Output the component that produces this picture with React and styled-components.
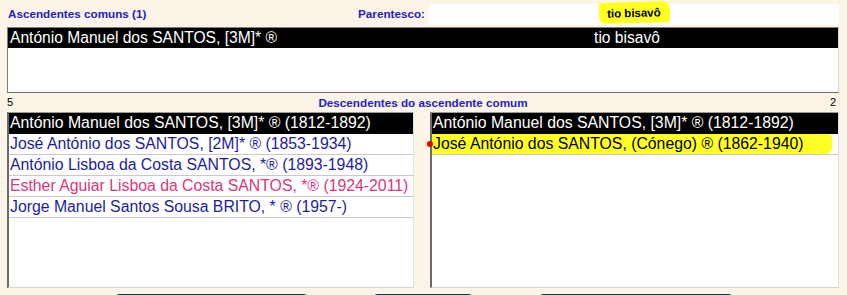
import React from "react";
import styled, { createGlobalStyle } from "styled-components";

const GlobalStyle = createGlobalStyle`
  html, body {
    margin: 0;
    padding: 0;
    background: #fcf4e7;
    overflow: hidden;
  }
`;

const Page = styled.div`
  width: 847px;
  height: 295px;
  overflow: hidden;
  background: #fcf4e7;
  font-family: "Liberation Sans", Arial, sans-serif;
  padding: 0 8px 0 7px;
  box-sizing: border-box;
`;

const HeaderRow = styled.div`
  height: 27px;
  display: flex;
  align-items: center;
`;

const Label = styled.div`
  font-size: 11.7px;
  font-weight: bold;
  color: #2222c4;
  padding-left: ${(p) => p.$pl || 0}px;
  margin-right: ${(p) => p.$mr || 0}px;
  flex: ${(p) => (p.$grow ? 1 : "none")};
`;

const RelationField = styled.div`
  width: 410px;
  height: 21px;
  margin-top: 2px;
  background: #ffffff;
  display: flex;
  align-items: center;
  justify-content: center;
  box-sizing: border-box;
`;

const Marker = styled.span`
  font-size: 11.5px;
  font-weight: bold;
  color: #000;
  background: #ffff20;
  padding: 5px 9px 4px 8px;
  margin-top: -4px;
  border-radius: 2px 7px 3px 6px;
  transform: rotate(-1.5deg);
`;

const TopList = styled.div`
  height: 66px;
  border: 1px solid #7f7f7f;
  border-right-color: #d8d8d8;
  border-bottom-color: #6f6f6f;
  background: #fff;
  box-sizing: border-box;
`;

const TopRow = styled.div`
  height: 20px;
  background: #000;
  color: #fff;
  font-size: 15.6px;
  display: grid;
  grid-template-columns: 421px 1fr;
  align-items: center;
  line-height: 20px;
`;

const Cell = styled.div`
  padding-left: ${(p) => p.$pl || 0}px;
  padding-right: ${(p) => p.$pr || 0}px;
  text-align: ${(p) => p.$align || "left"};
  white-space: nowrap;
`;

const SubHeader = styled.div`
  height: 19px;
  display: grid;
  grid-template-columns: 1fr auto 1fr;
  align-items: center;
`;

const Count = styled.div`
  font-size: 11px;
  color: #000;
  text-align: ${(p) => p.$align};
  padding: 0 ${(p) => p.$pr || 0}px 0 ${(p) => p.$pl || 0}px;
  margin-top: -1px;
`;

const Lists = styled.div`
  display: flex;
  gap: 16px;
`;

const ListBox = styled.div`
  width: ${(p) => p.$w}px;
  height: 176px;
  border: 1px solid #9a9a9a;
  border-left: 2px solid #6a6a6a;
  border-right-color: #e2e2e2;
  border-bottom-color: #d4d4d4;
  background: #fff;
  box-sizing: border-box;
`;

const Row = styled.div`
  position: relative;
  height: 21px;
  line-height: 20px;
  font-size: 15.8px;
  white-space: nowrap;
  padding-left: 1px;
  box-sizing: border-box;
  border-bottom: 1px solid ${(p) => (p.$selected ? "#000" : "#c9c9c9")};
  background: ${(p) => (p.$selected ? "#000" : "#fff")};
  color: ${(p) => (p.$selected ? "#fff" : p.$color || "#1c1ca0")};
`;

const Highlight = styled.div`
  background: #ffff26;
  color: #000;
  margin: 0 6px 0 -1px;
  padding-left: 1px;
  border-radius: 1px 4px 6px 2px;
  line-height: 20px;
`;

const Dot = styled.span`
  position: absolute;
  left: -5px;
  top: 7px;
  width: 6px;
  height: 6px;
  border-radius: 50%;
  background: #e80000;
`;

const Buttons = styled.div`
  display: flex;
  margin-top: 6px;
`;

const Button = styled.div`
  width: ${(p) => p.$w}px;
  margin-left: ${(p) => p.$ml}px;
  height: 24px;
  border: 1px solid #1d3446;
  border-radius: 4px;
  background: #f2f2ee;
  box-sizing: border-box;
`;

const leftRows = [
  { text: "António Manuel dos SANTOS, [3M]* ® (1812-1892)", selected: true },
  { text: "José António dos SANTOS, [2M]* ® (1853-1934)" },
  { text: "António Lisboa da Costa SANTOS, *® (1893-1948)" },
  { text: "Esther Aguiar Lisboa da Costa SANTOS, *® (1924-2011)", color: "#e0357d" },
  { text: "Jorge Manuel Santos Sousa BRITO, * ® (1957-)" },
];

export default function App() {
  return (
    <Page>
      <GlobalStyle />
      <HeaderRow>
        <Label $pl={1} $grow>
          Ascendentes comuns (1)
        </Label>
        <Label $mr={4}>Parentesco:</Label>
        <RelationField>
          <Marker>tio bisavô</Marker>
        </RelationField>
      </HeaderRow>
      <TopList>
        <TopRow>
          <Cell $pl={2}>António Manuel dos SANTOS, [3M]* ®</Cell>
          <Cell $align="center" $pr={13}>tio bisavô</Cell>
        </TopRow>
      </TopList>
      <SubHeader>
        <Count $align="left" $pl={0}>5</Count>
        <Label>Descendentes do ascendente comum</Label>
        <Count $align="right" $pr={3}>2</Count>
      </SubHeader>
      <Lists>
        <ListBox $w={408}>
          {leftRows.map((r, i) => (
            <Row key={i} $selected={r.selected} $color={r.color}>
              {r.text}
            </Row>
          ))}
        </ListBox>
        <ListBox $w={410}>
          <Row $selected>António Manuel dos SANTOS, [3M]* ® (1812-1892)</Row>
          <Row>
            <Dot />
            <Highlight>José António dos SANTOS, (Cónego) ® (1862-1940)</Highlight>
          </Row>
        </ListBox>
      </Lists>
      <Buttons>
        <Button $w={193} $ml={108} />
        <Button $w={100} $ml={65} />
        <Button $w={194} $ml={66} />
      </Buttons>
    </Page>
  );
}
